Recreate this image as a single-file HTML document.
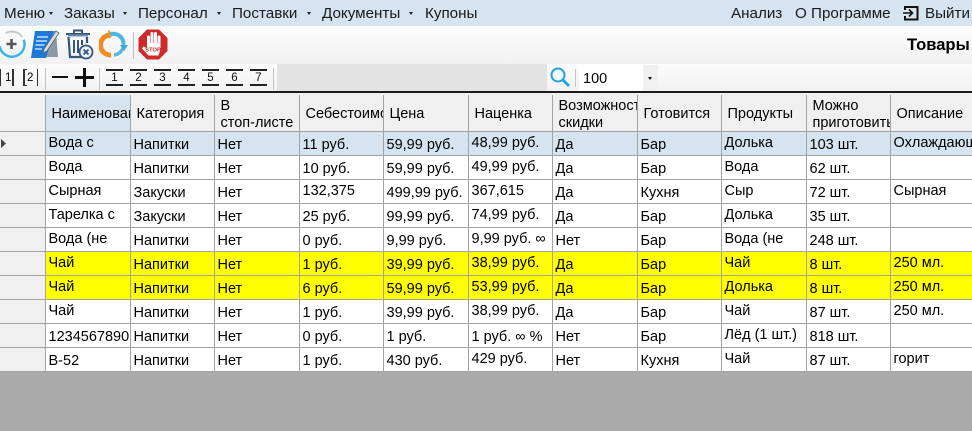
<!DOCTYPE html>
<html lang="ru"><head><meta charset="utf-8"><title>Товары</title>
<style>
html,body{margin:0;padding:0}
body{width:972px;height:431px;overflow:hidden;background:#ababab;position:relative;font-family:"Liberation Sans",sans-serif;color:#000}
.bar{position:absolute;left:0;width:972px}
.m{position:absolute;top:6px;font-size:15.2px;line-height:16px;white-space:nowrap;color:#1a1a1a}
.car{position:absolute;top:12px;width:0;height:0;border-left:2.5px solid transparent;border-right:2.5px solid transparent;border-top:3px solid #222}
.sep{position:absolute;width:1px;background:#c4c4c4}
.ni{position:absolute;top:69px;width:17px;height:17px;font-size:11.5px;line-height:14px;text-align:center;border-top:2px solid #222;border-bottom:2px solid #222;box-sizing:border-box;color:#111}
table{position:absolute;left:-1px;top:95px;border-collapse:collapse;table-layout:fixed;width:973px;font-size:14.5px;background:#fff}
td,th{border:1px solid #a3a3a3;padding:0;height:23px;overflow:hidden;white-space:nowrap;font-weight:normal;text-align:left;box-sizing:border-box}
th{background:#f0f0f0;height:36px;border-top:0;line-height:17px;padding:0 0 0 6px;border-bottom:1px solid #a3a3a3}
th div{transform:translateY(2px)}
th.s{background:#d6e4f2}
td{height:24px;padding-left:3px;line-height:16px;padding-top:5px;vertical-align:top}
td.u{padding-top:3px}
td.h,th.h{background:#f0f0f0;padding:0;border-left:0}
tr.sel td{background:#d6e4f2}
tr.sel td.h{background:#f0f0f0}
tr.y td{background:#ff0}
tr.y td.h{background:#f0f0f0}
</style></head><body>
<div class="bar" style="top:0;height:26px;background:#d6e4f2"></div>
<div class="bar" style="top:26px;height:38px;background:linear-gradient(#fdfdfd,#f1f1f1)"></div>
<div class="bar" style="top:64px;height:28px;background:linear-gradient(#fcfcfc,#f2f2f2)"></div>
<div class="bar" style="top:91px;height:2px;background:#1c1c1c"></div>
<div class="bar" style="top:93px;height:2px;background:#f0f0f0"></div>

<span class="m" style="left:4px">Меню</span><i class="car" style="left:49px"></i>
<span class="m" style="left:64px">Заказы</span><i class="car" style="left:123px"></i>
<span class="m" style="left:138px">Персонал</span><i class="car" style="left:217px"></i>
<span class="m" style="left:232px">Поставки</span><i class="car" style="left:307px"></i>
<span class="m" style="left:322px">Документы</span><i class="car" style="left:409px"></i>
<span class="m" style="left:425px">Купоны</span>
<span class="m" style="left:731px">Анализ</span>
<span class="m" style="left:795px">О Программе</span>
<svg style="position:absolute;left:903px;top:5px" width="16" height="16" viewBox="0 0 16 16"><path d="M2 5V2h12.500v12.500H2V11" fill="none" stroke="#111" stroke-width="2"/><path d="M0 8h9M6 4.500 9.500 8 6 11.500" fill="none" stroke="#111" stroke-width="1.600"/></svg>
<span class="m" style="left:925px">Выйти</span>
<span style="position:absolute;left:907px;top:36px;font-size:16.6px;line-height:18px;font-weight:bold">Товары</span>

<!-- plus icon -->
<svg style="position:absolute;left:0;top:29px" width="28" height="30" viewBox="0 0 28 30"><path d="M5.750 4.200A12.500 12.500 0 0 1 22.200 7.800" fill="none" stroke="#c5c8ca" stroke-width="2"/><path d="M23.700 10.700A12.500 12.500 0 1 1 -.300 17.200" fill="none" stroke="#35b4ea" stroke-width="2.400"/><path d="M11.500 10v10M6.500 15h10" stroke="#555" stroke-width="2.600"/></svg>
<!-- edit icon -->
<svg style="position:absolute;left:30px;top:28px" width="30" height="32" viewBox="0 0 30 32"><path d="M8 3h18l2 26H6z" fill="#8d99a6"/><path d="M5 3 24 3 16 30 1 30z" fill="#1f78d6"/><path d="M7 9h11M6 13h11M5.500 17h9M5 21h7" stroke="#bfe2ff" stroke-width="1.600"/><path d="M14 21 26 3l3 2-12 18-4 2z" fill="#d8dde2" stroke="#5a6470" stroke-width=".8"/></svg>
<!-- trash -->
<svg style="position:absolute;left:65px;top:29px" width="29" height="31" viewBox="0 0 29 31"><path d="M9 4V1.500h8V4M1 5h24" fill="none" stroke="#34567c" stroke-width="2"/><path d="M3.500 8 5 28h13M22 8v6" fill="none" stroke="#34567c" stroke-width="2.200"/><path d="M3 6.500h20" stroke="#6f8fae" stroke-width="2"/><path d="M9 11v13M13 11v13M17 11v5" stroke="#34567c" stroke-width="2"/><circle cx="21" cy="23" r="6.500" fill="#eef1f4" stroke="#34567c" stroke-width="1.800"/><path d="m18.500 20.500 5 5m0-5-5 5" stroke="#34567c" stroke-width="1.800"/></svg>
<!-- refresh -->
<svg style="position:absolute;left:99px;top:30px" width="29" height="29" viewBox="0 0 29 29"><path d="M11 5A10 10 0 0 0 12 25" fill="none" stroke="#f78a1d" stroke-width="5"/><path d="M9 0l6 4-5 5z" fill="#f78a1d"/><path d="M11 4.500A10 10 0 0 1 24.500 14" fill="none" stroke="#4db8e0" stroke-width="4"/><path d="M24.500 14A10.500 10.500 0 0 1 15 25" fill="none" stroke="#56b9dc" stroke-width="3.500"/><path d="M21 15h8l-4 6z" fill="#3fa9d6"/></svg>
<div class="sep" style="left:133px;top:32px;height:27px;background:#bdbdbd"></div>
<!-- stop -->
<svg style="position:absolute;left:138px;top:29px" width="30" height="31" viewBox="0 0 30 31"><path d="M9 .500h12L29.500 9v13L21 30.500H9L.500 22V9z" fill="#cf2a2a"/><path d="M10.500 8v9M14 4.500v12M17.500 4.500v12M21 8v10" stroke="#fff" stroke-width="3" stroke-linecap="round"/><path d="M9 14H22.500V20L20.500 26.500H10.500L4 19.500 5.500 17.500 9 19z" fill="#fff"/><text x="15" y="22.500" font-family="Liberation Sans" font-size="5.800" font-weight="bold" fill="#cf2a2a" text-anchor="middle">STOP</text></svg>

<!-- row 2 -->
<span style="position:absolute;left:5px;top:71px;font-size:11.500px;line-height:14px">1</span>
<div style="position:absolute;left:0;top:69px;width:1px;height:17px;background:#333"></div>
<div style="position:absolute;left:12px;top:69px;width:2px;height:17px;background:#333"></div>
<div style="position:absolute;left:23px;top:69px;width:2px;height:17px;background:#333"></div>
<div style="position:absolute;left:23px;top:69px;width:4px;height:1px;background:#333"></div>
<div style="position:absolute;left:23px;top:85px;width:4px;height:1px;background:#333"></div>
<span style="position:absolute;left:27px;top:71px;font-size:11.500px;line-height:14px">2</span>
<div style="position:absolute;left:37px;top:69px;width:1px;height:17px;background:#333"></div>
<div class="sep" style="left:45px;top:68px;height:22px"></div>
<div style="position:absolute;left:52px;top:76px;width:16px;height:2px;background:#111"></div>
<div style="position:absolute;left:75px;top:76px;width:19px;height:3px;background:#111"></div>
<div style="position:absolute;left:83px;top:68px;width:3px;height:19px;background:#111"></div>
<div class="sep" style="left:99px;top:68px;height:22px"></div>
<div class="ni" style="left:106px">1</div><div class="ni" style="left:130px">2</div><div class="ni" style="left:154px">3</div><div class="ni" style="left:178px">4</div><div class="ni" style="left:202px">5</div><div class="ni" style="left:226px">6</div><div class="ni" style="left:250px">7</div>
<div class="sep" style="left:273px;top:68px;height:22px"></div>
<div style="position:absolute;left:277px;top:64px;width:270px;height:27px;background:#e3e3e3"></div>
<svg style="position:absolute;left:549px;top:66px" width="22" height="22" viewBox="0 0 22 22"><circle cx="9" cy="9" r="6.500" fill="#eef8fe" stroke="#23a0e6" stroke-width="2"/><path d="m14 14 6 6" stroke="#23a0e6" stroke-width="2.800"/></svg>
<div class="sep" style="left:575px;top:69px;height:18px"></div>
<div style="position:absolute;left:579px;top:65px;width:64px;height:26px;background:#fff"></div>
<div style="position:absolute;left:643px;top:65px;width:15px;height:26px;background:#f0f0f0"></div>
<i class="car" style="left:648px;top:77px;border-top-color:#111"></i>
<span style="position:absolute;left:583px;top:71px;font-size:14.500px;line-height:16px">100</span>

<table>
<colgroup><col style="width:46px"><col style="width:85px"><col style="width:84px"><col style="width:85px"><col style="width:84px"><col style="width:85px"><col style="width:84px"><col style="width:85px"><col style="width:84px"><col style="width:85px"><col style="width:84px"><col style="width:82px"></colgroup>
<tr><th class="h"></th><th class="s"><div>Наименование</div></th><th><div>Категория</div></th><th><div>В<br>стоп-листе</div></th><th><div>Себестоимость</div></th><th><div>Цена</div></th><th><div>Наценка</div></th><th><div>Возможность<br>скидки</div></th><th><div>Готовится</div></th><th><div>Продукты</div></th><th><div>Можно<br>приготовить</div></th><th><div>Описание</div></th></tr>
<tr class="sel"><td class="h"><svg width="8" height="22" style="display:block;margin:0 0 0 2px" viewBox="0 0 8 22"><path d="M0 7 5 11.500 0 16z" fill="#444"/></svg></td><td class="u">Вода с</td><td>Напитки</td><td>Нет</td><td>11 руб.</td><td>59,99 руб.</td><td class="u">48,99 руб.</td><td>Да</td><td>Бар</td><td class="u">Долька</td><td>103 шт.</td><td class="u">Охлаждающий</td></tr>
<tr><td class="h"></td><td class="u">Вода</td><td>Напитки</td><td>Нет</td><td>10 руб.</td><td>59,99 руб.</td><td class="u">49,99 руб.</td><td>Да</td><td>Бар</td><td class="u">Вода</td><td>62 шт.</td><td class="u"></td></tr>
<tr><td class="h"></td><td class="u">Сырная</td><td>Закуски</td><td>Нет</td><td class="u">132,375</td><td>499,99 руб.</td><td class="u">367,615</td><td>Да</td><td>Кухня</td><td class="u">Сыр</td><td>72 шт.</td><td class="u">Сырная</td></tr>
<tr><td class="h"></td><td class="u">Тарелка с</td><td>Закуски</td><td>Нет</td><td>25 руб.</td><td>99,99 руб.</td><td class="u">74,99 руб.</td><td>Да</td><td>Бар</td><td class="u">Долька</td><td>35 шт.</td><td class="u"></td></tr>
<tr><td class="h"></td><td class="u">Вода (не</td><td>Напитки</td><td>Нет</td><td>0 руб.</td><td>9,99 руб.</td><td class="u">9,99 руб. ∞</td><td>Нет</td><td>Бар</td><td class="u">Вода (не</td><td>248 шт.</td><td class="u"></td></tr>
<tr class="y"><td class="h"></td><td class="u">Чай</td><td>Напитки</td><td>Нет</td><td>1 руб.</td><td>39,99 руб.</td><td class="u">38,99 руб.</td><td>Да</td><td>Бар</td><td class="u">Чай</td><td>8 шт.</td><td class="u">250 мл.</td></tr>
<tr class="y"><td class="h"></td><td class="u">Чай</td><td>Напитки</td><td>Нет</td><td>6 руб.</td><td>59,99 руб.</td><td class="u">53,99 руб.</td><td>Да</td><td>Бар</td><td class="u">Долька</td><td>8 шт.</td><td class="u">250 мл.</td></tr>
<tr><td class="h"></td><td class="u">Чай</td><td>Напитки</td><td>Нет</td><td>1 руб.</td><td>39,99 руб.</td><td class="u">38,99 руб.</td><td>Да</td><td>Бар</td><td class="u">Чай</td><td>87 шт.</td><td class="u">250 мл.</td></tr>
<tr><td class="h"></td><td>1234567890</td><td>Напитки</td><td>Нет</td><td>0 руб.</td><td>1 руб.</td><td>1 руб. ∞ %</td><td>Нет</td><td>Бар</td><td class="u">Лёд (1 шт.)</td><td>818 шт.</td><td class="u"></td></tr>
<tr><td class="h"></td><td>B-52</td><td>Напитки</td><td>Нет</td><td>1 руб.</td><td>430 руб.</td><td class="u">429 руб.</td><td>Нет</td><td>Кухня</td><td class="u">Чай</td><td>87 шт.</td><td class="u">горит</td></tr>
</table>
</body></html>
